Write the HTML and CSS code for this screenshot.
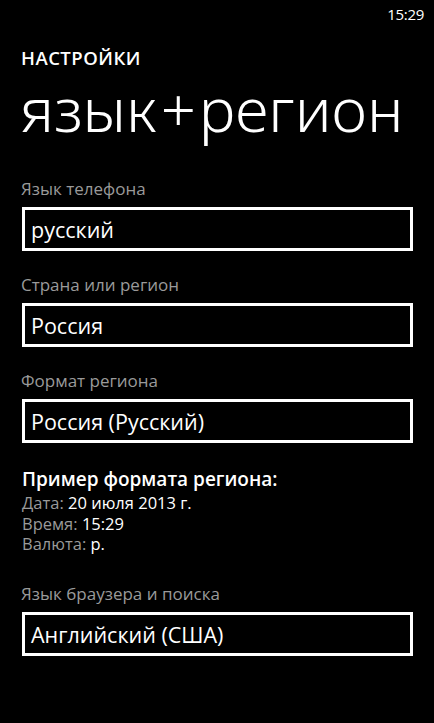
FILE: index.html
```html
<!DOCTYPE html>
<html lang="ru">
<head>
<meta charset="utf-8">
<link rel="stylesheet" href="styles.css">
</head>
<body>
<div class="screen">
  <div class="status">15:29</div>
  <div class="app-title">НАСТРОЙКИ</div>
  <h1 class="page-title">язык<span class="plus">+</span>регион</h1>
  <div class="field field-first">
    <div class="label">Язык телефона</div>
    <div class="box">русский</div>
  </div>
  <div class="field">
    <div class="label">Страна или регион</div>
    <div class="box">Россия</div>
  </div>
  <div class="field">
    <div class="label">Формат региона</div>
    <div class="box">Россия (Русский)</div>
  </div>
  <div class="sample">
    <div class="sample-title">Пример формата региона:</div>
    <div class="sample-line sample-line-first"><span class="key">Дата:</span> 20 июля 2013 г.</div>
    <div class="sample-line"><span class="key">Время:</span> 15:29</div>
    <div class="sample-line"><span class="key">Валюта:</span> р.</div>
  </div>
  <div class="field field-last">
    <div class="label">Язык браузера и поиска</div>
    <div class="box">Английский (США)</div>
  </div>
</div>
</body>
</html>
```
FILE: styles.css
```css
html, body {
  margin: 0;
  padding: 0;
  background: #000;
}
body {
  width: 434px;
  height: 723px;
  overflow: hidden;
  font-family: "Open Sans", "Noto Sans", sans-serif;
  color: #fff;
}
.screen {
  display: flex;
  flex-direction: column;
  padding: 0 21px 0 22px;
}
.status {
  align-self: flex-end;
  margin-right: -11px;
  margin-top: 4px;
  font-size: 15px;
  line-height: 20px;
  letter-spacing: -0.3px;
}
.app-title {
  font-size: 18.5px;
  font-weight: 600;
  line-height: 24px;
  letter-spacing: 0.5px;
  margin-top: 22px;
  margin-left: -1px;
}
.page-title {
  margin: 3px 0 0 -2px;
  font-family: "Noto Sans", "Open Sans", sans-serif;
  font-size: 61.5px;
  font-weight: 300;
  line-height: 70px;
  white-space: nowrap;
}
.plus {
  margin: 0 3px 0 4px;
}
.field {
  display: flex;
  flex-direction: column;
}
.label {
  color: #9a9a9a;
  font-size: 17px;
  line-height: 20px;
  margin-top: 24px;
  margin-left: -1px;
}
.field-first .label {
  margin-top: 36px;
}
.field-last .label {
  margin-top: 29px;
}
.box {
  border: 3px solid #fff;
  margin-top: 8px;
  padding: 1px 6px 0;
  height: 37px;
  font-size: 21.5px;
  line-height: 37px;
}
.sample {
  display: flex;
  flex-direction: column;
  margin-top: 24px;
}
.sample-title {
  font-size: 19px;
  font-weight: 600;
  line-height: 24px;
}
.sample-line {
  font-size: 16.5px;
  line-height: 20.5px;
}
.sample-line-first {
  margin-top: 2px;
}
.key {
  color: #9a9a9a;
}
```
